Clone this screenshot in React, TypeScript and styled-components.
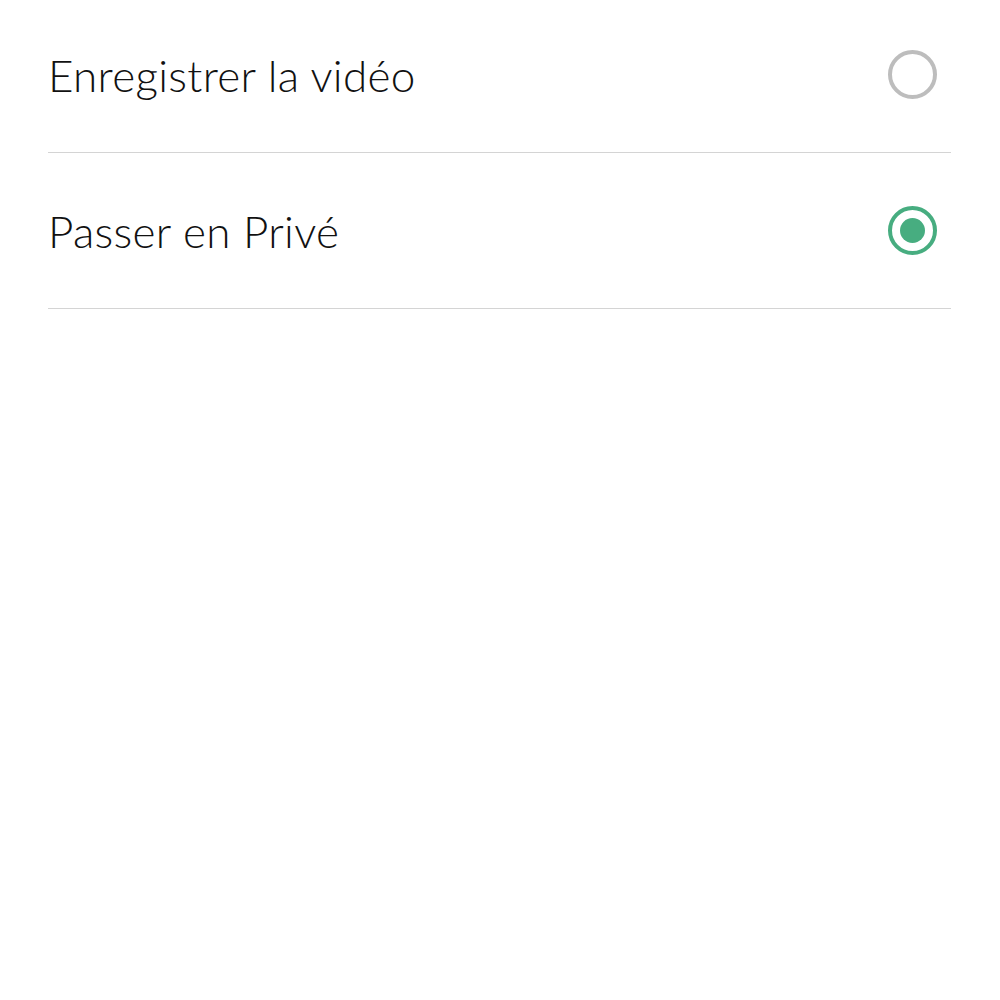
import React, { useState } from 'react'
import styled, { createGlobalStyle } from 'styled-components'

const GlobalStyle = createGlobalStyle`
  html, body {
    margin: 0;
    padding: 0;
    background: #ffffff;
  }
  body {
    font-family: Lato, "Open Sans", "Liberation Sans", sans-serif;
  }
`

const StyledList = styled.ul`
  list-style: none;
  margin: -3px 49px 0 48px;
  padding: 0;
`

const StyledRow = styled.li`
  display: flex;
  align-items: center;
  justify-content: space-between;
  height: 155px;
  border-bottom: 1px solid #d4d4d4;
  cursor: pointer;
`

const StyledLabel = styled.span`
  font-size: 44px;
  font-weight: 300;
  color: #111111;
  letter-spacing: 0.3px;
`

const StyledRadio = styled.span<{ $checked: boolean }>`
  box-sizing: border-box;
  width: 49px;
  height: 49px;
  margin-right: 14px;
  border-radius: 50%;
  border: 4px solid ${(p) => (p.$checked ? '#47ad80' : '#bdbdbd')};
  display: flex;
  align-items: center;
  justify-content: center;

  &::after {
    content: '';
    width: 25px;
    height: 25px;
    border-radius: 50%;
    background: #47ad80;
    display: ${(p) => (p.$checked ? 'block' : 'none')};
  }
`

const options = ['Enregistrer la vidéo', 'Passer en Privé']

function App() {
  const [selected, setSelected] = useState(1)

  return (
    <>
      <GlobalStyle />
      <StyledList>
        {options.map((label, i) => (
          <StyledRow key={label} onClick={() => setSelected(i)}>
            <StyledLabel>{label}</StyledLabel>
            <StyledRadio $checked={selected === i} />
          </StyledRow>
        ))}
      </StyledList>
    </>
  )
}

export default App
